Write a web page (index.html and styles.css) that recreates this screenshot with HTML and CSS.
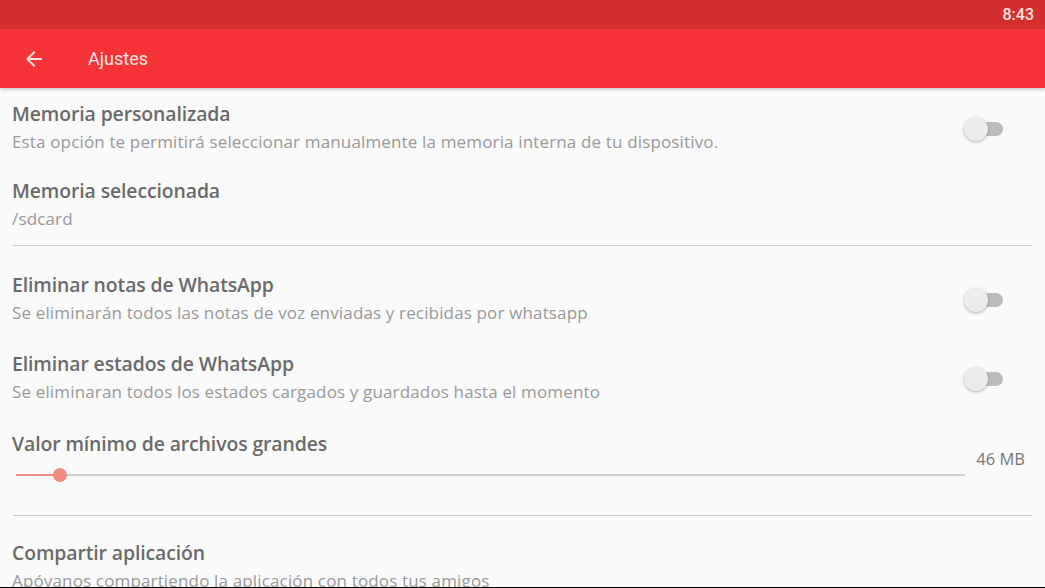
FILE: index.html
```html
<html>
  <head>
    <meta charset="utf-8">
    <title>Ajustes</title>
    <link rel="stylesheet" href="styles.css">
  </head>
  <body>
    <div class="statusbar"><span class="clock">8:43</span></div>
    <div class="toolbar">
      <svg class="back" width="24" height="24" viewBox="0 0 24 24">
        <path d="M20 11H7.83l5.59-5.59L12 4l-8 8 8 8 1.41-1.41L7.83 13H20v-2z" fill="#fde4e4"/>
      </svg>
      <span class="title">Ajustes</span>
    </div>
    <div class="prefs">
      <div class="pref pref-first">
        <div class="pref-text">
          <div class="pref-title">Memoria personalizada</div>
          <div class="pref-summary">Esta opción te permitirá seleccionar manualmente la memoria interna de tu dispositivo.</div>
        </div>
        <div class="switch"><div class="thumb"></div></div>
      </div>
      <div class="pref">
        <div class="pref-text">
          <div class="pref-title">Memoria seleccionada</div>
          <div class="pref-summary">/sdcard</div>
        </div>
      </div>
      <div class="divider"></div>
      <div class="pref pref-after-divider">
        <div class="pref-text">
          <div class="pref-title">Eliminar notas de WhatsApp</div>
          <div class="pref-summary">Se eliminarán todos las notas de voz enviadas y recibidas por whatsapp</div>
        </div>
        <div class="switch"><div class="thumb"></div></div>
      </div>
      <div class="pref pref-spaced">
        <div class="pref-text">
          <div class="pref-title">Eliminar estados de WhatsApp</div>
          <div class="pref-summary">Se eliminaran todos los estados cargados y guardados hasta el momento</div>
        </div>
        <div class="switch"><div class="thumb"></div></div>
      </div>
      <div class="pref-slider">
        <div class="pref-title">Valor mínimo de archivos grandes</div>
        <div class="slider-row">
          <div class="slider">
            <div class="slider-fill" style="width: 43px"></div>
            <div class="slider-thumb" style="left: 43px"></div>
          </div>
          <span class="slider-value">46 MB</span>
        </div>
      </div>
      <div class="divider divider-low"></div>
      <div class="pref pref-last">
        <div class="pref-text">
          <div class="pref-title">Compartir aplicación</div>
          <div class="pref-summary">Apóyanos compartiendo la aplicación con todos tus amigos</div>
        </div>
      </div>
    </div>
    <div class="navline"></div>
  </body>
</html>
```

FILE: styles.css
```css
body {
  margin: 0;
  width: 1045px;
  height: 588px;
  overflow: hidden;
  background: #fafafa;
  font-family: "Open Sans", "Noto Sans", sans-serif;
  position: relative;
}

.statusbar {
  height: 29px;
  background: #d32f2f;
  display: flex;
  justify-content: flex-end;
  align-items: center;
  padding-right: 11px;
}
.clock {
  color: #fbe3e3;
  font-family: "Roboto", sans-serif;
  font-size: 16px;
  font-weight: 500;
}

.toolbar {
  height: 59px;
  background: #f53336;
  display: flex;
  align-items: center;
  padding-left: 22px;
  box-shadow: 0 2px 3px rgba(0, 0, 0, 0.18);
  position: relative;
}
.toolbar .back {
  margin-right: 42px;
}
.toolbar .title {
  color: #fde4e4;
  font-family: "Roboto", sans-serif;
  font-size: 18px;
  margin-top: -1px;
}

.prefs {
  padding: 0 13px 0 12px;
}

.pref {
  display: flex;
  align-items: center;
  padding: 11px 0;
}
.pref-first {
  margin-top: 2px;
}
.pref-after-divider {
  margin-top: 15px;
}
.pref-spaced {
  margin-top: 2px;
}
.pref-text {
  flex: 1;
}
.pref-title {
  color: #6a6a6a;
  font-size: 19.4px;
  line-height: 26px;
  font-weight: 600;
  letter-spacing: -0.1px;
}
.pref-summary {
  color: #999;
  font-size: 17px;
  line-height: 29px;
  letter-spacing: 0.15px;
}

.switch {
  width: 37px;
  height: 14px;
  border-radius: 7px;
  background: #bcbcbc;
  position: relative;
  margin-right: 29px;
}
.switch .thumb {
  position: absolute;
  left: -2px;
  top: -5px;
  width: 24px;
  height: 24px;
  border-radius: 50%;
  background: #ececec;
  box-shadow: 0 1px 3px rgba(0, 0, 0, 0.3);
}

.divider {
  height: 1px;
  background: #c8c8c8;
  margin: 1px 0 0 1px;
}
.divider-low {
  margin-top: 22px;
}

.pref-slider {
  margin-top: 14px;
}
.slider-row {
  display: flex;
  align-items: flex-start;
  height: 36px;
}
.slider {
  flex: 1;
  height: 2px;
  background: #cfcfcf;
  position: relative;
  margin: 17px 11px 0 4px;
}
.slider-fill {
  position: absolute;
  left: 0;
  top: 0;
  height: 2px;
  background: #f28a80;
}
.slider-thumb {
  position: absolute;
  top: -6px;
  width: 14px;
  height: 14px;
  margin-left: -6px;
  border-radius: 50%;
  background: #f28a80;
}
.slider-value {
  color: #777;
  font-size: 16.5px;
  line-height: 24px;
  margin-right: 7px;
  margin-top: -10px;
}

.pref-last {
  margin-top: 13px;
}

.navline {
  position: absolute;
  left: 0;
  right: 0;
  bottom: 0;
  height: 1px;
  background: #000;
}
```
